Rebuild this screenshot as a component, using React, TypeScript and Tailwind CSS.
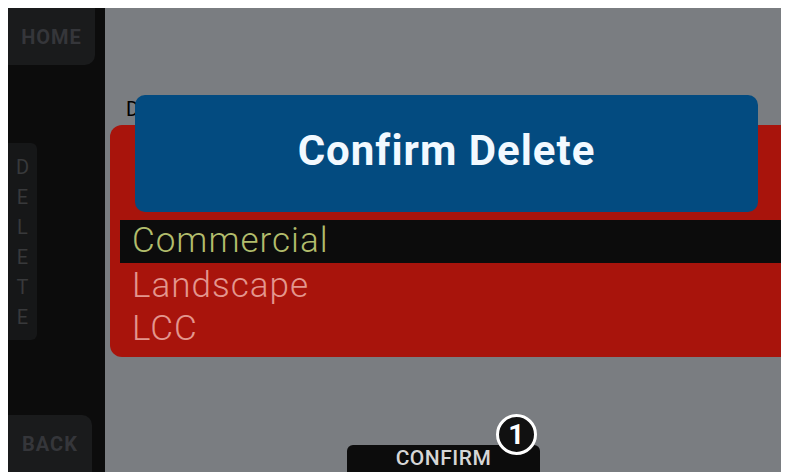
import React from "react";

const presets = [
  { name: "Commercial", selected: true },
  { name: "Landscape", selected: false },
  { name: "LCC", selected: false },
];

function SideButton({ label, className }: { label: string; className: string }) {
  return (
    <div className={`flex items-center justify-center bg-[#1a1b1c] text-[20px] font-bold tracking-[1px] text-[#35363a] ${className}`}>
      {label}
    </div>
  );
}

export default function App() {
  return (
    <div className="w-[787px] h-[476px] bg-white pl-2 pt-2 font-['Roboto',sans-serif]">
      <div className="flex w-[773px] h-[464px] overflow-hidden">
        {/* left soft keys */}
        <div className="flex flex-col w-[97px] bg-[#0c0c0c]">
          <SideButton label="HOME" className="w-[87px] h-[57px] rounded-br-[10px]" />
          <div className="mt-[78px] flex h-[197px] w-[29px] flex-col items-center justify-center gap-[10px] rounded-r-[6px] bg-[#161718] text-[20px] font-normal leading-[20px] text-[#38393b]">
            {"DELETE".split("").map((c, i) => (
              <span key={i}>{c}</span>
            ))}
          </div>
          <SideButton label="BACK" className="mt-auto w-[84px] h-[57px] rounded-tr-[10px]" />
        </div>

        {/* main screen */}
        <div className="relative flex flex-1 flex-col bg-[#7a7d81]">
          <div className="pt-[90px] pl-[21px] text-[20px] font-normal leading-[22px] text-black">DELETE USER SETUP</div>
          <div className="mt-[5px] ml-[5px] h-[232px] rounded-l-[12px] bg-[#a8140c] pl-[10px] pt-[95px]">
            {presets.map((p) => (
              <div
                key={p.name}
                className={`flex h-[43px] items-center pl-[12px] text-[35px] font-light tracking-[1px] ${
                  p.selected ? "bg-[#0c0c0c] text-[#b2bd6c]" : "pt-[4px] text-[#e3968e]"
                }`}
              >
                {p.name}
              </div>
            ))}
          </div>

          {/* bottom soft key */}
          <div className="mt-auto pl-[242px]">
            <div className="relative flex h-[27px] w-[193px] items-center justify-center rounded-t-[6px] bg-[#0c0c0c] text-[21px] font-medium leading-none tracking-[0.5px] text-[#d6d6d6]">
              CONFIRM
              <div className="absolute left-[149px] top-[-31px] flex h-[41px] w-[41px] items-center justify-center rounded-full border-[3px] border-white bg-[#111] text-[28px] font-bold leading-none text-white">
                1
              </div>
            </div>
          </div>

          {/* confirm dialog */}
          <div className="absolute left-[30px] top-[87px] flex h-[117px] w-[623px] items-center justify-center rounded-[10px] bg-[#034b80] pb-[6px] text-[42px] font-bold tracking-[1px] text-[#f2f9ff]">
            Confirm Delete
          </div>
        </div>
      </div>
    </div>
  );
}
